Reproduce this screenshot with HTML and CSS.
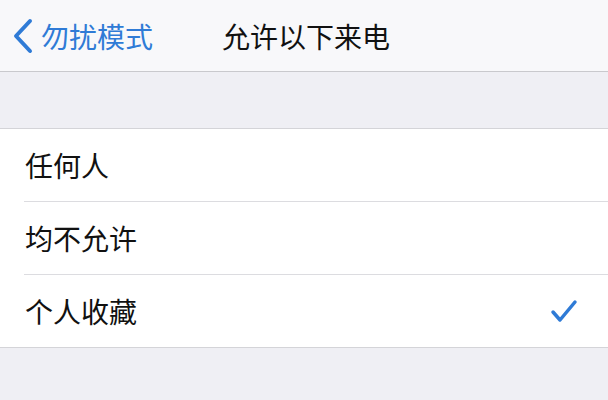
FILE: index.html
```html
<!DOCTYPE html>
<html lang="zh">
<head>
<meta charset="utf-8">
<link rel="stylesheet" href="styles.css">
</head>
<body>
<div class="nav">
  <div class="back">
    <svg class="chev" width="22" height="36" viewBox="0 0 22 36"><path d="M18 3 L4 18 L18 33" fill="none" stroke="#2f7bd6" stroke-width="4" stroke-linecap="round" stroke-linejoin="round"/></svg>
    <span>勿扰模式</span>
  </div>
  <div class="title">允许以下来电</div>
</div>
<div class="gap"></div>
<div class="group">
  <div class="row"><span class="label">任何人</span></div>
  <div class="row"><span class="label">均不允许</span></div>
  <div class="row last"><span class="label">个人收藏</span>
    <svg class="check" width="28" height="26" viewBox="0 0 28 26"><path d="M3 14 L10 22 L25 4" fill="none" stroke="#2f7bd6" stroke-width="3.5" stroke-linecap="round" stroke-linejoin="round"/></svg>
  </div>
</div>
</body>
</html>
```
FILE: styles.css
```css
html, body {
  margin: 0;
  padding: 0;
  background: #efeff4;
  font-family: "Noto Sans CJK SC", "Noto Sans", sans-serif;
}
.nav {
  height: 71px;
  background: #f8f8fa;
  border-bottom: 1px solid #c9c9cd;
  display: flex;
  align-items: center;
}
.back {
  display: flex;
  align-items: center;
  padding-left: 12px;
  color: #2f7bd6;
  font-size: 28px;
  gap: 7px;
}
.back span { line-height: 1; }
.title {
  margin-left: 69px;
  font-size: 28px;
  color: #111;
  line-height: 1;
}
.gap { height: 56px; }
.group {
  background: #fff;
  border-top: 1px solid #d4d4d8;
  border-bottom: 1px solid #d4d4d8;
  padding-left: 24px;
}
.row {
  height: 72px;
  border-bottom: 1px solid #dcdce0;
  display: flex;
  align-items: center;
  justify-content: space-between;
  padding-right: 30px;
}
.row.last { border-bottom: none; }
.label {
  font-size: 28px;
  color: #111;
  line-height: 1;
  padding-left: 1px;
}
.check { display: block; }
```
